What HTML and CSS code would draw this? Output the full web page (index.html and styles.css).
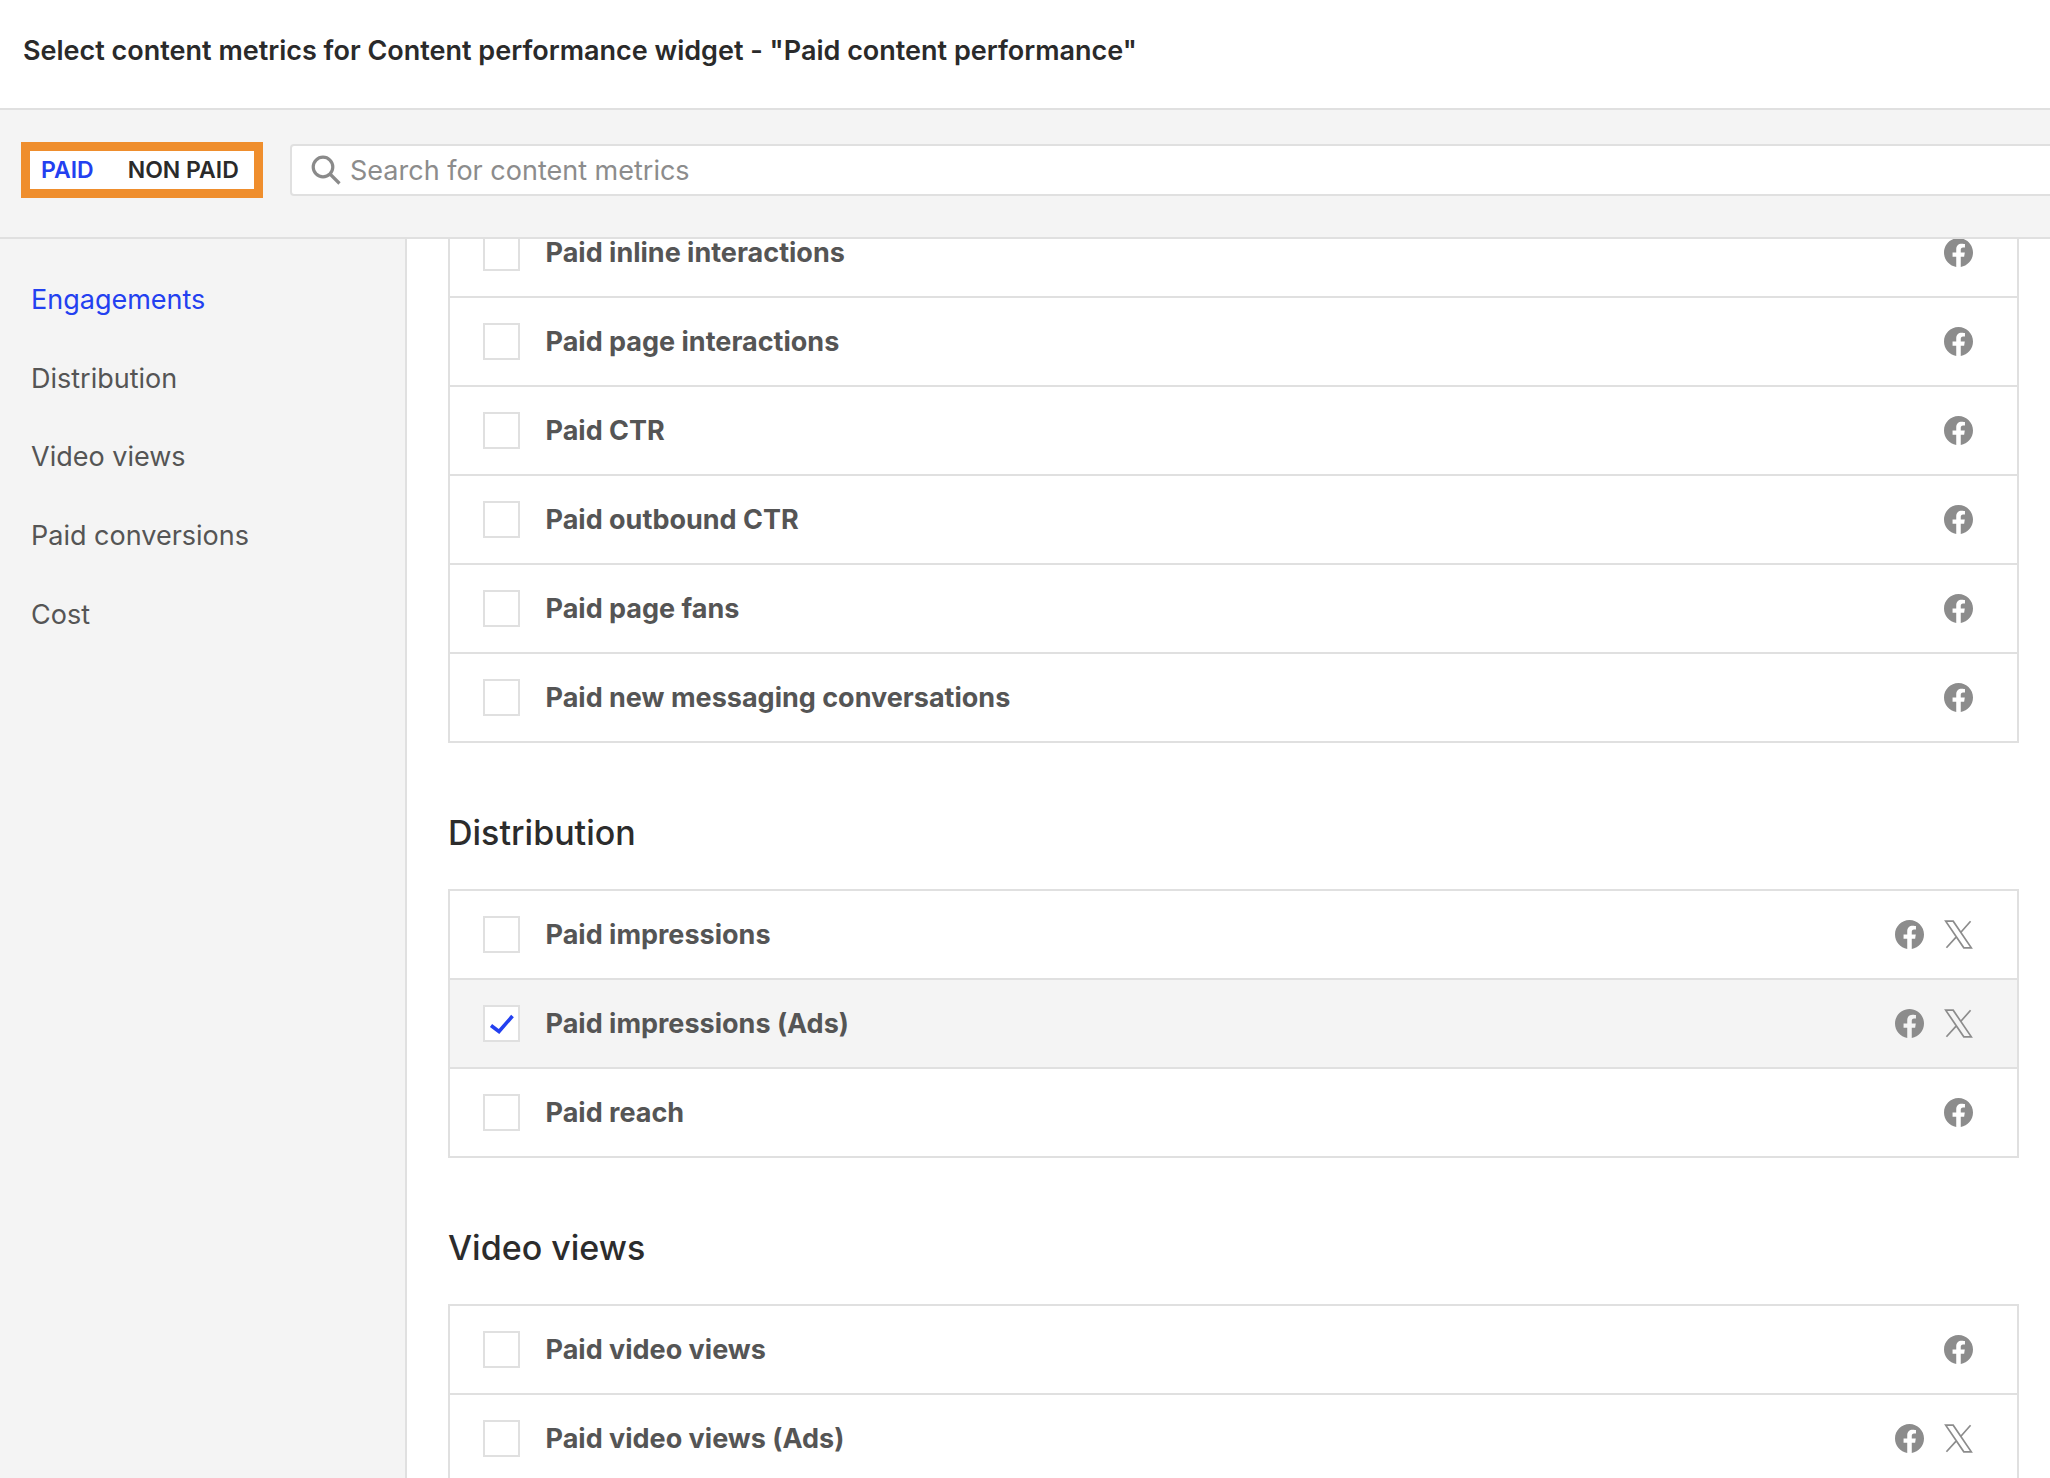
FILE: index.html
```html
<!DOCTYPE html>
<html lang="en">
<head>
<meta charset="utf-8">
<title>Select content metrics</title>
<link rel="stylesheet" href="styles.css">
</head>
<body>
<svg class="sprite" aria-hidden="true">
  <symbol id="fb" viewBox="0 0 24 24"><path d="M24 12.073c0-6.627-5.373-12-12-12s-12 5.373-12 12c0 5.99 4.388 10.954 10.125 11.854v-8.385H7.078v-3.47h3.047V9.43c0-3.007 1.792-4.669 4.533-4.669 1.312 0 2.686.235 2.686.235v2.953H15.83c-1.491 0-1.956.925-1.956 1.874v2.25h3.328l-.532 3.47h-2.796v8.385C19.612 23.027 24 18.062 24 12.073z"/></symbol>
  <symbol id="x" viewBox="0 0 24 24"><path d="M1.4 1H7.6L22.6 23H16.4ZM22 1 13.6 10.6M10.2 14 2 23" fill="none" stroke="currentColor" stroke-width="1.4"/></symbol>
</svg>
<div class="app">
  <header class="title-bar"><h1>Select content metrics for Content performance widget - "Paid content performance"</h1></header>
  <div class="toolbar">
    <div class="toggle"><span class="toggle-on">PAID</span><span class="toggle-off">NON PAID</span></div>
    <label class="search">
      <svg class="search-icon" viewBox="0 0 30 30" aria-hidden="true"><circle cx="12" cy="12" r="9.8"/><path d="M19 19 28.5 28.5"/></svg>
      <input type="text" placeholder="Search for content metrics">
    </label>
  </div>
  <div class="main">
    <nav class="side">
      <a class="side-link active">Engagements</a>
      <a class="side-link">Distribution</a>
      <a class="side-link">Video views</a>
      <a class="side-link">Paid conversions</a>
      <a class="side-link">Cost</a>
    </nav>
    <div class="content">
      <ul class="list list-first">
        <li class="row"><span class="box"></span><span class="label">Paid inline interactions</span><span class="icons"><svg class="ic"><use href="#fb"/></svg></span></li>
        <li class="row"><span class="box"></span><span class="label">Paid page interactions</span><span class="icons"><svg class="ic"><use href="#fb"/></svg></span></li>
        <li class="row"><span class="box"></span><span class="label">Paid CTR</span><span class="icons"><svg class="ic"><use href="#fb"/></svg></span></li>
        <li class="row"><span class="box"></span><span class="label">Paid outbound CTR</span><span class="icons"><svg class="ic"><use href="#fb"/></svg></span></li>
        <li class="row"><span class="box"></span><span class="label">Paid page fans</span><span class="icons"><svg class="ic"><use href="#fb"/></svg></span></li>
        <li class="row"><span class="box"></span><span class="label">Paid new messaging conversations</span><span class="icons"><svg class="ic"><use href="#fb"/></svg></span></li>
      </ul>
      <h2 class="section">Distribution</h2>
      <ul class="list">
        <li class="row"><span class="box"></span><span class="label">Paid impressions</span><span class="icons"><svg class="ic"><use href="#fb"/></svg><svg class="ic"><use href="#x"/></svg></span></li>
        <li class="row selected"><span class="box"><svg class="check" viewBox="0 0 37 37" aria-hidden="true"><path d="M8 20.5 16 26.5 29.5 11"/></svg></span><span class="label">Paid impressions (Ads)</span><span class="icons"><svg class="ic"><use href="#fb"/></svg><svg class="ic"><use href="#x"/></svg></span></li>
        <li class="row"><span class="box"></span><span class="label">Paid reach</span><span class="icons"><svg class="ic"><use href="#fb"/></svg></span></li>
      </ul>
      <h2 class="section section-late">Video views</h2>
      <ul class="list">
        <li class="row"><span class="box"></span><span class="label">Paid video views</span><span class="icons"><svg class="ic"><use href="#fb"/></svg></span></li>
        <li class="row"><span class="box"></span><span class="label">Paid video views (Ads)</span><span class="icons"><svg class="ic"><use href="#fb"/></svg><svg class="ic"><use href="#x"/></svg></span></li>
      </ul>
    </div>
  </div>
</div>
</body>
</html>
```
FILE: styles.css
```css
* { box-sizing: border-box; }
html, body { margin: 0; height: 100%; }
body { font-family: Inter, "Liberation Sans", sans-serif; background: #fff; overflow: hidden; }
.sprite { display: none; }
.app { display: flex; flex-direction: column; height: 1478px; }
.title-bar { height: 110px; border-bottom: 2px solid #e0e0e0; display: flex; align-items: center; padding: 0 23px 8px; flex: none; }
.title-bar h1 { margin: 0; font-size: 27px; font-weight: 600; color: #2a2a2a; }
.toolbar { height: 129px; flex: none; background: #f4f4f4; border-bottom: 2px solid #e0e0e0; display: flex; align-items: center; padding: 0 0 8px 21px; gap: 27px; }
.toggle { width: 242px; height: 56px; border: 9px solid #ef8e2d; background: #fff; display: flex; align-items: center; font-size: 23px; font-weight: 600; padding-left: 11px; gap: 34px; flex: none; }
.toggle-on { color: #2340f0; }
.toggle-off { color: #2a2a2a; }
.search { flex: 1; min-width: 0; height: 52px; margin-right: -4px; background: #fff; border: 2px solid #e0e0e0; border-radius: 4px; display: flex; align-items: center; padding-left: 19px; gap: 9px; }
.search-icon { width: 30px; height: 30px; fill: none; stroke: #8a8a8a; stroke-width: 3.2; flex: none; }
.search input { border: 0; outline: 0; flex: 1; font: 400 27px Inter, "Liberation Sans", sans-serif; background: transparent; padding: 2px 0 0; }
.search input::placeholder { color: #8c8c8c; opacity: 1; }
.main { flex: 1; display: flex; min-height: 0; }
.side { width: 407px; flex: none; background: #f4f4f4; border-right: 2px solid #e0e0e0; padding: 21px 0 0 31px; display: flex; flex-direction: column; }
.side-link { height: 78.7px; display: flex; align-items: center; font-size: 27px; color: #555; }
.side-link.active { color: #2340f0; }
.content { flex: 1; min-width: 0; overflow: hidden; padding: 0 31px 0 41px; }
.list { list-style: none; margin: 0; padding: 0; border: 2px solid #e0e0e0; }
.list-first { margin-top: -32px; }
.row { height: 89px; display: flex; align-items: center; padding-left: 33px; border-top: 2px solid #e0e0e0; }
.row:first-child { border-top: 0; height: 87px; }
.row.selected { background: #f4f4f4; }
.box { width: 37px; height: 37px; border: 2px solid #e0e0e0; background: #fff; flex: none; }
.check { display: block; width: 37px; height: 37px; margin: -2px; fill: none; stroke: #2340f0; stroke-width: 3.6; }
.label { margin-left: 25.5px; font-size: 27px; font-weight: 700; color: #555; flex: 1; }
.icons { display: flex; align-items: center; gap: 20px; padding-right: 44px; }
.ic { width: 29px; height: 29px; fill: #8c8c8c; color: #8c8c8c; display: block; }
.section { margin: 0; height: 146px; display: flex; align-items: center; font-size: 34px; font-weight: 500; color: #2c2c2c; padding-top: 32px; }
.section-late { height: 146px; }
```
